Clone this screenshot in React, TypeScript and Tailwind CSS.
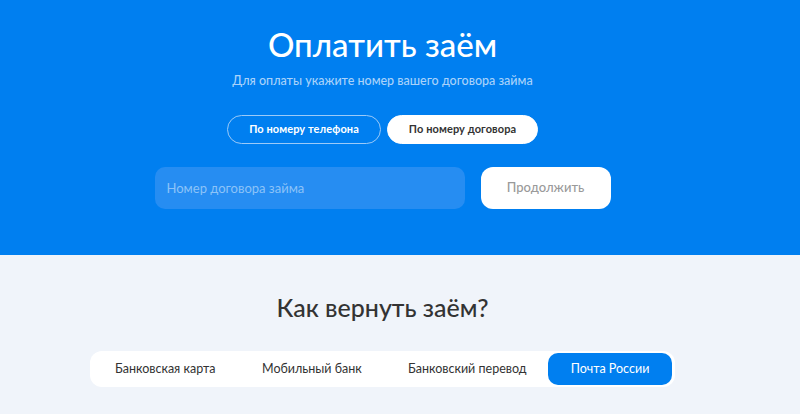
import React, { useState } from 'react'

const tabs = [
  { label: 'Банковская карта', cls: 'w-[159px] pl-[22px] text-left' },
  { label: 'Мобильный банк', cls: 'w-[138px] pl-[10px] text-left' },
  { label: 'Банковский перевод', cls: 'w-[158px] pl-[18px] text-left' },
  { label: 'Почта России', cls: 'w-[124px] text-center' },
]

export default function App() {
  const [mode, setMode] = useState<'phone' | 'contract'>('contract')
  const [tab, setTab] = useState(3)

  return (
    <div className="min-h-screen w-full bg-[#f0f4fa]" style={{ fontFamily: 'Lato, "Noto Sans", sans-serif' }}>
      {/* Hero */}
      <section className="h-[255px] w-full bg-[#007ff0] pr-[35px]">
        <div className="flex flex-col items-center pt-[24px]">
          <h1 className="text-[33px] font-medium leading-[40px] text-white">Оплатить заём</h1>
          <p className="mt-[8px] text-[12.5px] font-medium leading-[18px] text-[#a9d2fa]">
            Для оплаты укажите номер вашего договора займа
          </p>

          <div className="mt-[25px] flex gap-[6px]">
            <button
              onClick={() => setMode('phone')}
              className={`h-[29px] w-[154px] rounded-full border text-[11px] font-bold tracking-[0.1px] ${
                mode === 'phone' ? 'border-white bg-white text-[#333]' : 'border-[#9ccaf8] text-white'
              }`}
            >
              По номеру телефона
            </button>
            <button
              onClick={() => setMode('contract')}
              className={`h-[29px] w-[151px] rounded-full border text-[11px] font-bold tracking-[0.1px] ${
                mode === 'contract' ? 'border-white bg-white text-[#333]' : 'border-[#9ccaf8] text-white'
              }`}
            >
              По номеру договора
            </button>
          </div>

          <div className="mt-[23px] flex gap-[16px]">
            <input
              placeholder="Номер договора займа"
              className="h-[42px] w-[310px] rounded-[10px] bg-[#268df2] px-[12px] text-[13px] text-white outline-none placeholder:text-[#8cc3f8]"
            />
            <button className="h-[42px] w-[130px] rounded-[12px] bg-white text-[13px] font-medium text-[#9a9a9a]">
              Продолжить
            </button>
          </div>
        </div>
      </section>

      {/* How to repay */}
      <section className="flex flex-col items-center pr-[35px] pt-[36px]">
        <h2 className="text-[25px] font-medium leading-[32px] text-[#333]">Как вернуть заём?</h2>
        <div className="mt-[28px] flex h-[36px] w-[585px] items-center rounded-[12px] bg-white px-[3px]">
          {tabs.map((t, i) => (
            <button
              key={t.label}
              onClick={() => setTab(i)}
              className={`h-[32px] whitespace-nowrap rounded-[10px] text-[12.5px] ${t.cls} ${
                tab === i ? 'bg-[#007ff0] text-white' : 'text-[#333]'
              }`}
            >
              {t.label}
            </button>
          ))}
        </div>
      </section>
    </div>
  )
}
